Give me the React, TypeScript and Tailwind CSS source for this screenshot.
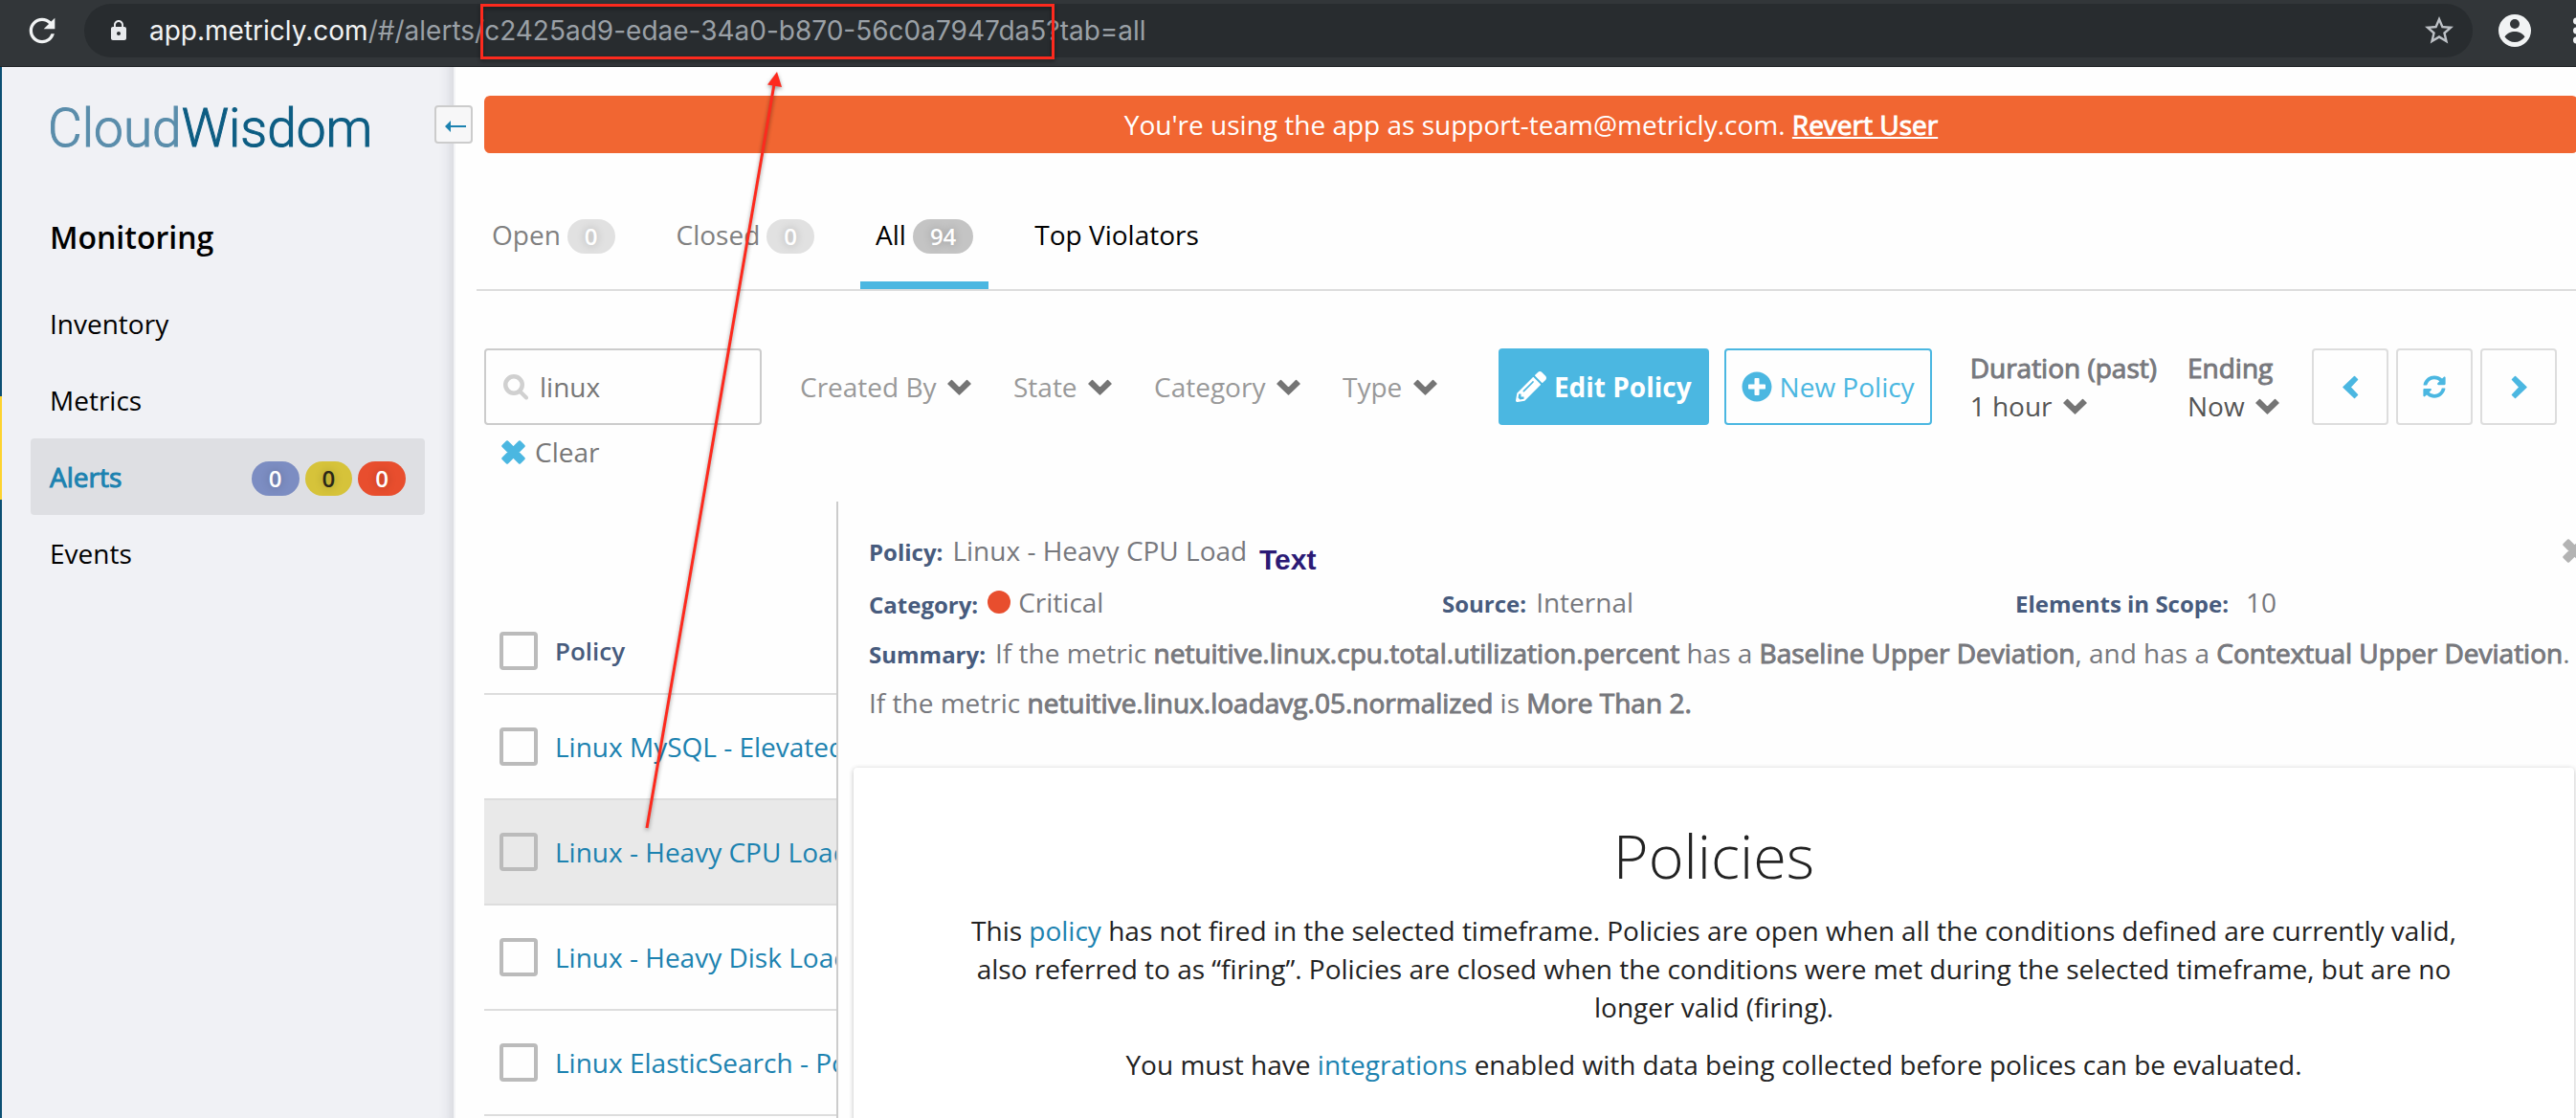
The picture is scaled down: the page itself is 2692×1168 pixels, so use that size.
import type { ReactNode } from "react";
import { FaPencilAlt, FaPlusCircle, FaSyncAlt } from "react-icons/fa";
import { MdLock, MdRefresh, MdStarBorder } from "react-icons/md";

const policies = [
  { name: "Linux MySQL - Elevated", selected: false },
  { name: "Linux - Heavy CPU Load", selected: true },
  { name: "Linux - Heavy Disk Load", selected: false },
  { name: "Linux ElasticSearch - Po", selected: false },
];

const filters = ["Created By", "State", "Category", "Type"];

function ChevronDown() {
  return (
    <svg viewBox="0 0 25 17" className="h-[17px] w-[25px] shrink-0" fill="#757575" stroke="#757575" strokeWidth="1.500" strokeLinejoin="round">
      <path d="M1 5L4.500 1.500L12.500 9.500L20.500 1.500L24 5L12.500 16z" />
    </svg>
  );
}

function ChevronSide({ flip }: { flip?: boolean }) {
  return (
    <svg viewBox="0 0 17 25" className="h-[25px] w-[17px]" fill="currentColor" stroke="currentColor" strokeWidth="1.500" strokeLinejoin="round">
      <path d={flip ? "M4.500 1.500L1.500 4.500L9 12.500L1.500 20.500L4.500 23.500L16 12.500z" : "M12.500 1.500L15.500 4.500L8 12.500L15.500 20.500L12.500 23.500L1 12.500z"} />
    </svg>
  );
}

function Cross() {
  return (
    <svg viewBox="0 0 25 25" className="size-[25px] shrink-0" fill="currentColor" stroke="currentColor" strokeWidth="2.500" strokeLinejoin="round">
      <path d="M1.500 6L6 1.500L12.500 8L19 1.500L23.500 6L17 12.500L23.500 19L19 23.500L12.500 17L6 23.500L1.500 19L8 12.500z" />
    </svg>
  );
}

function BrowserBar() {
  return (
    <header className="flex h-[70px] shrink-0 items-start overflow-hidden border-b border-[#202326] bg-[#323639] pt-1 pl-6 font-[Inter,sans-serif]">
      <button type="button" aria-label="Reload" className="mr-6 flex h-14 w-10 items-center justify-center text-[#f1f3f4]">
        <MdRefresh className="size-10" />
      </button>
      <div className="flex h-14 flex-1 items-center rounded-full bg-[#282c2f] pr-[17px] pl-6">
        <MdLock className="size-6 shrink-0 text-[#e8eaed]" />
        <p className="ml-5 flex-1 leading-14 whitespace-nowrap text-[#9aa0a6]">
          <span className="text-[#f1f3f4]">app.metricly.com</span>
          /#/alerts/c2425ad9-edae-34a0-b870-56c0a7947da5?tab=all
        </p>
        <button type="button" aria-label="Bookmark" className="text-[#bdc1c6]">
          <MdStarBorder className="size-9" />
        </button>
      </div>
      <button type="button" aria-label="Profile" className="ml-[27px] flex h-14 items-center">
        <svg viewBox="0 0 34 34" className="size-[34px]">
          <circle cx="17" cy="17" r="17" fill="#f1f3f4" />
          <circle cx="17" cy="10" r="5" fill="#323639" />
          <path d="M6.500 23.500C9 19.500 13 18 17 18s8 1.500 10.500 5.500C25 27 21 29 17 29s-8-2-10.500-5.500z" fill="#323639" />
        </svg>
      </button>
      <button type="button" aria-label="Menu" className="-mr-1 ml-11 flex h-14 items-center">
        <svg viewBox="0 0 7 28" className="h-7 w-[7px]" fill="#f1f3f4">
          <circle cx="3.500" cy="4" r="3.500" />
          <circle cx="3.500" cy="14" r="3.500" />
          <circle cx="3.500" cy="24" r="3.500" />
        </svg>
      </button>
    </header>
  );
}

function Sidebar() {
  return (
    <aside className="relative flex w-[476px] shrink-0 border-r-2 border-[#f3f4f6] bg-[#f0f1f5] shadow-[inset_-16px_0_14px_-14px_rgba(40,45,60,0.16)]">
      <div className="flex w-0.5 flex-col bg-[#0b4f73]">
        <div className="mt-[344px] h-[108px] bg-[#fdd32f]" />
      </div>
      <div className="flex-1 pr-[30px] pl-[30px]">
        <div className="mt-8 pl-[18px] font-[Roboto,sans-serif] text-[55px] leading-16 font-light text-[#5a8dab] [-webkit-text-stroke:1px]">
          Cloud<span className="text-[#0d5d83]">Wisdom</span>
        </div>
        <h2 className="mt-[42px] pl-5 text-[32px] leading-20 font-semibold text-black">Monitoring</h2>
        <nav className="mt-2.5 flex flex-col leading-20 text-black">
          <a href="#inventory" className="pl-5">Inventory</a>
          <a href="#metrics" className="pl-5">Metrics</a>
          <a href="#alerts" className="flex items-baseline gap-1.5 rounded bg-[#dedfe3] pr-5 pl-5 text-[#1c82b0]">
            <span className="mr-auto [-webkit-text-stroke:1px]">Alerts</span>
            <CountBadge className="bg-[#7c8dc2] text-white">0</CountBadge>
            <CountBadge className="bg-[#d6c33a] text-[#2a2718]">0</CountBadge>
            <CountBadge className="bg-[#e84e2e] text-white">0</CountBadge>
          </a>
          <a href="#events" className="pl-5">Events</a>
        </nav>
      </div>
      <button
        type="button"
        aria-label="Collapse sidebar"
        className="absolute top-10 -right-5 z-10 flex size-10 items-center justify-center rounded border-2 border-[#ccc] bg-[#f7f7f8]"
      >
        <svg viewBox="0 0 22 12" className="ml-1 mt-1 h-3 w-[22px]" fill="#1c82b0">
          <path d="M0 6L6 0v5h16v2H6v5z" />
        </svg>
      </button>
    </aside>
  );
}

function CountBadge({ className, children }: { className: string; children: ReactNode }) {
  return (
    <span
      className={
        "rounded-full px-[18px] text-2xl leading-9 font-semibold [text-shadow:0_0_8px_rgba(0,0,0,0.25)] " + className
      }
    >
      {children}
    </span>
  );
}

function Tabs() {
  const tab = "flex items-baseline gap-[7px] border-b-8 px-4 pb-6 leading-[50px]";
  return (
    <div role="tablist" className="mt-[60px] ml-[22px] flex gap-8 border-b-2 border-[#ddd]">
      <button type="button" role="tab" className={tab + " border-transparent text-[#808080]"}>
        Open<CountBadge className="bg-[#e1e1e1] text-white">0</CountBadge>
      </button>
      <button type="button" role="tab" className={tab + " border-transparent text-[#808080]"}>
        Closed<CountBadge className="bg-[#e1e1e1] text-white">0</CountBadge>
      </button>
      <button type="button" role="tab" aria-selected="true" className={tab + " border-[#4bb7e1] text-black"}>
        All<CountBadge className="bg-[#c4c4c4] text-white">94</CountBadge>
      </button>
      <button type="button" role="tab" className={tab + " border-transparent text-black"}>
        Top Violators
      </button>
    </div>
  );
}

function Dropdown({ id, label, value, tone }: { id: string; label?: string; value: string; tone: string }) {
  return (
    <div className="flex items-center gap-[11px]">
      <select id={id} aria-label={label} className={"appearance-none bg-transparent leading-10 outline-none " + tone}>
        <option>{value}</option>
      </select>
      <ChevronDown />
    </div>
  );
}

function Toolbar() {
  const square = "flex size-20 items-center justify-center rounded border-2 border-[#ddd] text-[#4bb7e1]";
  return (
    <div className="mt-[60px] flex items-start pr-5 pl-[30px] whitespace-nowrap">
      <div>
        <div className="flex h-20 w-[290px] items-center gap-3 rounded border-2 border-[#ccc] pl-[18px]">
          <svg viewBox="0 0 26 27" className="h-[27px] w-[26px] shrink-0" fill="none" stroke="#d0d0d0">
            <circle cx="11" cy="11" r="8.750" strokeWidth="4.500" />
            <path d="M17.500 18L24 24.500" strokeWidth="4" strokeLinecap="round" />
          </svg>
          <input
            aria-label="Search policies"
            defaultValue="linux"
            className="w-full min-w-0 bg-transparent text-[#777] outline-none"
          />
        </div>
        <button type="button" className="mt-2 ml-[18px] flex items-center gap-[10px] leading-10 text-[#777]">
          <span className="text-[#4bb7e1]"><Cross /></span>
          Clear
        </button>
      </div>
      <div className="ml-10 flex h-20 items-center gap-11">
        {filters.map((f) => (
          <Dropdown key={f} id={"filter-" + f} label={f} value={f} tone="text-[#999]" />
        ))}
      </div>
      <button
        type="button"
        className="ml-auto flex h-20 items-center gap-2 rounded bg-[#4bb7e1] px-[18px] font-bold text-white"
      >
        <FaPencilAlt className="size-8" />
        Edit Policy
      </button>
      <button
        type="button"
        className="ml-4 flex h-20 items-center gap-2 rounded border-2 border-[#4bb7e1] px-4 text-[#4bb7e1]"
      >
        <FaPlusCircle className="size-8" />
        New Policy
      </button>
      <div className="ml-10 leading-10 text-[#77787d]">
        <label htmlFor="duration" className="block [-webkit-text-stroke:1px]">Duration (past)</label>
        <Dropdown id="duration" value="1 hour" tone="text-[#555]" />
      </div>
      <div className="mr-[34px] ml-8 leading-10 text-[#77787d]">
        <label htmlFor="ending" className="block [-webkit-text-stroke:1px]">Ending</label>
        <Dropdown id="ending" value="Now" tone="text-[#555]" />
      </div>
      <div className="flex gap-2">
        <button type="button" aria-label="Earlier" className={square}><ChevronSide /></button>
        <button type="button" aria-label="Refresh" className={square}><FaSyncAlt className="size-6" /></button>
        <button type="button" aria-label="Later" className={square}><ChevronSide flip /></button>
      </div>
    </div>
  );
}

function Check({ label }: { label: string }) {
  return (
    <input
      type="checkbox"
      aria-label={label}
      className="block size-10 appearance-none rounded border-4 border-[#bbb]"
    />
  );
}

function PolicyTable() {
  return (
    <div className="w-[370px] shrink-0 overflow-hidden border-r-2 border-[#ccc]">
      <table className="mt-28 w-full table-fixed border-separate border-spacing-0 text-left">
        <thead>
          <tr className="h-[90px]">
            <th className="w-[74px] border-b-2 border-[#ddd] pl-4"><Check label="Select all policies" /></th>
            <th className="border-b-2 border-[#ddd] text-[26px] font-semibold text-[#475b7d]">Policy</th>
          </tr>
        </thead>
        <tbody>
          {policies.map((p) => (
            <tr key={p.name} className={p.selected ? "h-[110px] bg-[#e9e9e9]" : "h-[110px]"}>
              <td className="border-b-2 border-[#ddd] pl-4"><Check label={p.name} /></td>
              <td className="overflow-hidden border-b-2 border-[#ddd] whitespace-nowrap">
                <a href="#policy" className="text-[#1c82b0]">{p.name}</a>
              </td>
            </tr>
          ))}
        </tbody>
      </table>
    </div>
  );
}

function Term({ children }: { children: ReactNode }) {
  return <span className="text-2xl font-bold text-[#475b7d]">{children}</span>;
}

function Strong({ children }: { children: ReactNode }) {
  return <strong className="font-normal [-webkit-text-stroke:1px]">{children}</strong>;
}

function PolicyDetail() {
  return (
    <section className="min-w-0 flex-1 pl-4">
      <div className="-mr-[13px] pt-6 pl-4 text-[#77787d]">
        <div className="flex h-[54px] items-center justify-between leading-[54px]">
          <p className="flex items-baseline gap-2.5"><Term>Policy:</Term>Linux - Heavy CPU Load</p>
          <button type="button" aria-label="Close details" className="mr-0.5 text-[#b3b3b3]">
            <Cross />
          </button>
        </div>
        <div className="grid grid-cols-3 leading-[54px]">
          <p className="flex items-baseline gap-2.5">
            <Term>Category:</Term>
            <span className="flex items-center gap-2">
              <span className="size-6 rounded-full bg-[#e84e2e]" />
              Critical
            </span>
          </p>
          <p className="flex items-baseline gap-2.5"><Term>Source:</Term>Internal</p>
          <p className="flex items-baseline gap-[18px]"><Term>Elements in Scope:</Term>10</p>
        </div>
        <p className="leading-[52px]">
          <span className="mr-2.5"><Term>Summary:</Term></span>
          If the metric <Strong>netuitive.linux.cpu.total.utilization.percent</Strong> has a{" "}
          <Strong>Baseline Upper Deviation</Strong>, and has a <Strong>Contextual Upper Deviation</Strong>.
          <br />
          If the metric <Strong>netuitive.linux.loadavg.05.normalized</Strong> is <Strong>More Than 2.</Strong>
        </p>
      </div>
      <div className="mt-[42px] mr-0.5 h-full rounded bg-white px-28 pt-[52px] text-center text-[#222] shadow-[0_1px_5px_rgba(0,0,0,0.25)]">
        <h1 className="text-[63px] leading-20 font-light">Policies</h1>
        <p className="mt-[18px] leading-10">
          This <a href="#policy" className="text-[#1c82b0]">policy</a> has not fired in the selected timeframe. Policies
          are open when all the conditions defined are currently valid, also referred to as “firing”. Policies are
          closed when the conditions were met during the selected timeframe, but are no longer valid (firing).
        </p>
        <p className="mt-5 leading-10">
          You must have <a href="#integrations" className="text-[#1c82b0]">integrations</a> enabled with data being
          collected before polices can be evaluated.
        </p>
      </div>
    </section>
  );
}

/* Markup drawn on top of the page: the framed id, its arrow and a caption. */
function Annotations() {
  return (
    <div className="pointer-events-none absolute inset-0 z-20">
      <svg className="size-full drop-shadow-[0_2px_2px_rgba(0,0,0,0.4)]">
        <rect x="503.500" y="5.500" width="597" height="55" fill="none" stroke="#fd2a1e" strokeWidth="3" />
        <path d="M676 865L809 88" stroke="#fd2a1e" strokeWidth="3" />
        <path d="M812 75L817 91L802 88.500z" fill="#fd2a1e" />
      </svg>
      <span className="absolute top-[568px] left-[1316px] font-['Liberation_Sans',sans-serif] text-[30px] leading-[34px] font-bold text-[#2b1a75]">
        Text
      </span>
    </div>
  );
}

export default function App() {
  return (
    <div className="relative flex h-screen flex-col overflow-hidden bg-[#fefefe] font-['Open_Sans',sans-serif] text-[28px]">
      <BrowserBar />
      <div className="flex min-h-0 flex-1">
        <Sidebar />
        <main className="flex min-w-0 flex-1 flex-col overflow-hidden">
          <div className="mt-[30px] -mr-0.5 ml-[30px] rounded-md bg-[#f16632] text-center leading-[60px] text-white">
            You're using the app as support-team@metricly.com.{" "}
            <a href="#revert" className="underline [-webkit-text-stroke:1px]">Revert User</a>
          </div>
          <Tabs />
          <Toolbar />
          <div className="mt-8 flex min-h-0 flex-1 pl-[30px]">
            <PolicyTable />
            <PolicyDetail />
          </div>
        </main>
      </div>
      <Annotations />
    </div>
  );
}
